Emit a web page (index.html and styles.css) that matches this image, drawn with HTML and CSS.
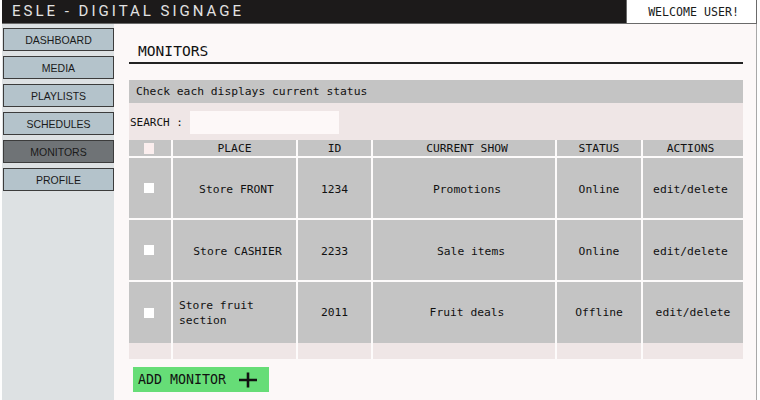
FILE: index.html
```html
<!DOCTYPE html>
<html>
<head>
<meta charset="utf-8">
<link rel="stylesheet" href="styles.css">
</head>
<body>
<div class="app">
  <header class="topbar">
    <div class="brand">ESLE - DIGITAL SIGNAGE</div>
    <div class="welcome">WELCOME USER!</div>
  </header>
  <div class="layout">
    <nav class="sidebar">
      <div class="nav-btn">DASHBOARD</div>
      <div class="nav-btn">MEDIA</div>
      <div class="nav-btn">PLAYLISTS</div>
      <div class="nav-btn">SCHEDULES</div>
      <div class="nav-btn active">MONITORS</div>
      <div class="nav-btn">PROFILE</div>
    </nav>
    <main class="main">
      <h1 class="title">MONITORS</h1>
      <div class="status-bar">Check each displays current status</div>
      <div class="search-row">
        <span class="search-label">SEARCH :</span>
        <div class="search-input"></div>
      </div>
      <div class="grid">
        <div class="cell head"><span class="check head-check"></span></div>
        <div class="cell head">PLACE</div>
        <div class="cell head">ID</div>
        <div class="cell head show">CURRENT SHOW</div>
        <div class="cell head">STATUS</div>
        <div class="cell head act">ACTIONS</div>

        <div class="cell row low"><span class="check"></span></div>
        <div class="cell row low place1">Store FRONT</div>
        <div class="cell row low">1234</div>
        <div class="cell row low show">Promotions</div>
        <div class="cell row low">Online</div>
        <div class="cell row low act">edit/delete</div>

        <div class="cell row low"><span class="check"></span></div>
        <div class="cell row low place2">Store CASHIER</div>
        <div class="cell row low">2233</div>
        <div class="cell row low show sale">Sale items</div>
        <div class="cell row low">Online</div>
        <div class="cell row low act">edit/delete</div>

        <div class="cell row row3"><span class="check"></span></div>
        <div class="cell row row3 place3"><span class="wrap">Store fruit section</span></div>
        <div class="cell row row3">2011</div>
        <div class="cell row row3 show">Fruit deals</div>
        <div class="cell row row3">Offline</div>
        <div class="cell row row3">edit/delete</div>
      </div>
      <div class="grid filler">
        <div class="cell empty"></div>
        <div class="cell empty"></div>
        <div class="cell empty"></div>
        <div class="cell empty"></div>
        <div class="cell empty"></div>
        <div class="cell empty"></div>
      </div>
      <div class="add-btn">
        <span>ADD MONITOR</span>
        <svg class="plus" width="20" height="18" viewBox="0 0 20 18"><path d="M10 1.5V16.5M1 9H19" stroke="#111" stroke-width="2.6" fill="none"/></svg>
      </div>
    </main>
  </div>
</div>
</body>
</html>
```

FILE: styles.css
```css
* { box-sizing: border-box; }
html, body { margin: 0; padding: 0; }
body {
  background: #fdfdfd;
  width: 760px;
  height: 400px;
  overflow: hidden;
  font-family: "DejaVu Sans Mono", monospace;
  color: #111;
}
.app {
  margin-left: 2px;
  width: 755px;
  height: 400px;
  border-right: 1px solid #a8a8a8;
  display: flex;
  flex-direction: column;
}
.topbar {
  height: 24px;
  background: #1c1a1a;
  display: flex;
  justify-content: space-between;
  border-bottom: 1px solid #6a6a6a;
}
.brand {
  font-family: Roboto, "Liberation Sans", sans-serif;
  font-size: 15px;
  letter-spacing: 3px;
  color: #e2e2e2;
  padding-left: 10px;
  line-height: 23px;
}
.welcome {
  width: 131px;
  margin-right: -1px;
  background: #fff;
  border: 1px solid #6a6a6a;
  border-top: none;
  margin-bottom: -1px;
  display: flex;
  align-items: center;
  justify-content: center;
  padding-left: 4px;
  font-size: 11.6px;
  color: #1a1a1a;
}
.layout {
  flex: 1;
  display: flex;
}
.sidebar {
  width: 112px;
  background: #dde1e3;
  padding-top: 4px;
  padding-left: 1px;
  display: flex;
  flex-direction: column;
  gap: 5px;
}
.nav-btn {
  height: 23px;
  background: #b4c3cb;
  border: 1px solid #3c3c3c;
  font-family: "Liberation Sans", Arial, sans-serif;
  font-size: 10.5px;
  color: #1a1a1a;
  display: flex;
  align-items: center;
  justify-content: center;
}
.nav-btn.active {
  background: #6f7376;
}
.main {
  flex: 1;
  background: #fcf8f8;
  padding: 0 13px 0 15px;
}
.title {
  margin: 0;
  font-weight: normal;
  font-size: 14.6px;
  line-height: 22px;
  padding: 16px 0 0 9px;
  height: 40px;
  border-bottom: 2px solid #222;
  color: #111;
}
.status-bar {
  margin-top: 16px;
  height: 23px;
  line-height: 23px;
  background: #c4c4c4;
  padding-left: 7px;
  font-size: 11.3px;
}
.search-row {
  height: 37px;
  background: #efe6e6;
  display: flex;
  align-items: center;
  padding-left: 1px;
  padding-top: 2px;
  gap: 7px;
  font-size: 11px;
}
.search-input {
  width: 149px;
  height: 23px;
  background: #fdf8f8;
}
.grid {
  display: grid;
  grid-template-columns: 42px 123px 73px 182px 84px 100px;
  gap: 2px;
  background: #fdfbfb;
}
.cell {
  background: #c4c4c4;
  display: flex;
  align-items: center;
  justify-content: center;
  font-size: 11.3px;
  color: #111;
}
.cell.head { height: 16px; }
.cell.row { height: 60px; }
.cell.low { padding-top: 3px; }
.cell.row3 { height: 61px; }
.show { padding-left: 6px; }
.sale { padding-left: 14px; }
.act { padding-right: 5px; }
.place1 { padding-left: 4px; }
.place2 { padding-left: 6px; }
.place3 { justify-content: flex-start; padding-left: 6px; }
.wrap { display: block; width: 100px; line-height: 15px; }
.check {
  display: block;
  width: 10px;
  height: 10px;
  background: #ffffff;
  margin-right: 2px;
}
.cell.low .check { margin-top: -3px; }
.head-check {
  height: 11px;
  background: #fbeeee;
}
.filler { background: #fdfbfb; row-gap: 0; }
.cell.empty { height: 16px; background: #efe6e6; }
.add-btn {
  margin: 8px 0 0 4px;
  width: 136px;
  height: 25px;
  background: #66dd77;
  display: flex;
  align-items: center;
  padding-left: 5px;
  gap: 12px;
  font-size: 13.3px;
  color: #111;
}
.plus { display: block; }
```
